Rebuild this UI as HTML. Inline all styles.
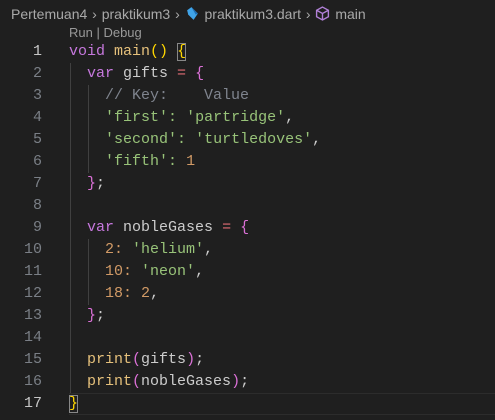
<!DOCTYPE html>
<html><head><style>
body{margin:0;width:495px;height:420px;background:#1f1f1f;overflow:hidden;position:relative;font-family:"Liberation Mono",monospace}
.bc{position:absolute;top:4px;left:11px;font:14px "Liberation Sans",sans-serif;color:#a9a9a9;white-space:nowrap;line-height:20px;word-spacing:1px}
.run{position:absolute;top:24px;left:69px;font:13px "Liberation Sans",sans-serif;color:#999;line-height:18px}
.ln{position:absolute;left:0;width:42px;text-align:right;color:#7a7f86;font-size:15px;line-height:22px}
.c{position:absolute;left:69px;font-size:15px;line-height:22px;color:#cccccc;white-space:pre}
.k{color:#c678dd}.f{color:#e5c07b}.s{color:#98c379}.n{color:#d19a66}.o{color:#e06c75}.cm{color:#7f848e}
.b1{color:#ffd700}.b2{color:#da70d6}
.g{position:absolute;width:1px;background:#404040}
</style></head><body>
<div class="bc">Pertemuan4 &#8250; praktikum3 &#8250; <svg width="15" height="15" viewBox="0 0 14 14" style="vertical-align:-2px"><path d="M2 4 L6 1 L12 7 L8 13 L3 8 Z" fill="#40a4e8"/><path d="M6 1 L12 7 L10 8 Z" fill="#1f6fb5"/></svg> praktikum3.dart &#8250; <svg width="15" height="15" viewBox="0 0 14 14" style="vertical-align:-2px" fill="none" stroke="#b180d7" stroke-width="1.3"><path d="M7 1 L12.5 4 V10 L7 13 L1.5 10 V4 Z M1.5 4 L7 7 L12.5 4 M7 7 V13"/></svg> main</div>
<div class="run">Run | Debug</div>
<div class="g" style="left:70px;top:63px;height:330px"></div>
<div class="g" style="left:88px;top:85px;height:88px"></div>
<div class="g" style="left:88px;top:239px;height:66px"></div>
<div style="position:absolute;left:69px;top:393px;width:426px;height:20px;border-top:1px solid #2c2c2c;border-bottom:1px solid #2c2c2c"></div>
<div style="position:absolute;left:69px;top:395px;width:9px;height:18px;box-sizing:border-box;border:1px solid #888"></div>
<div style="position:absolute;left:177px;top:43px;width:9px;height:18px;box-sizing:border-box;border:1px solid #888"></div>

<div class="ln" style="top:41px;color:#c6c6c6">1</div>
<div class="ln" style="top:63px">2</div>
<div class="ln" style="top:85px">3</div>
<div class="ln" style="top:107px">4</div>
<div class="ln" style="top:129px">5</div>
<div class="ln" style="top:151px">6</div>
<div class="ln" style="top:173px">7</div>
<div class="ln" style="top:195px">8</div>
<div class="ln" style="top:217px">9</div>
<div class="ln" style="top:239px">10</div>
<div class="ln" style="top:261px">11</div>
<div class="ln" style="top:283px">12</div>
<div class="ln" style="top:305px">13</div>
<div class="ln" style="top:327px">14</div>
<div class="ln" style="top:349px">15</div>
<div class="ln" style="top:371px">16</div>
<div class="ln" style="top:393px;color:#c6c6c6">17</div>

<div class="c" style="top:41px"><span class="k">void</span> <span class="f">main</span><span class="b1">()</span> <span class="b1">{</span></div>
<div class="c" style="top:63px">  <span class="k">var</span> gifts <span class="o">=</span> <span class="b2">{</span></div>
<div class="c" style="top:85px">    <span class="cm">// Key:    Value</span></div>
<div class="c" style="top:107px">    <span class="s">'first'</span><span class="s">:</span> <span class="s">'partridge'</span>,</div>
<div class="c" style="top:129px">    <span class="s">'second'</span><span class="s">:</span> <span class="s">'turtledoves'</span>,</div>
<div class="c" style="top:151px">    <span class="s">'fifth'</span><span class="s">:</span> <span class="n">1</span></div>
<div class="c" style="top:173px">  <span class="b2">}</span>;</div>
<div class="c" style="top:217px">  <span class="k">var</span> nobleGases <span class="o">=</span> <span class="b2">{</span></div>
<div class="c" style="top:239px">    <span class="n">2:</span> <span class="s">'helium'</span>,</div>
<div class="c" style="top:261px">    <span class="n">10:</span> <span class="s">'neon'</span>,</div>
<div class="c" style="top:283px">    <span class="n">18:</span> <span class="n">2</span>,</div>
<div class="c" style="top:305px">  <span class="b2">}</span>;</div>
<div class="c" style="top:349px">  <span class="f">print</span><span class="b2">(</span>gifts<span class="b2">)</span>;</div>
<div class="c" style="top:371px">  <span class="f">print</span><span class="b2">(</span>nobleGases<span class="b2">)</span>;</div>
<div class="c" style="top:393px"><span class="b1">}</span></div>
</body></html>
